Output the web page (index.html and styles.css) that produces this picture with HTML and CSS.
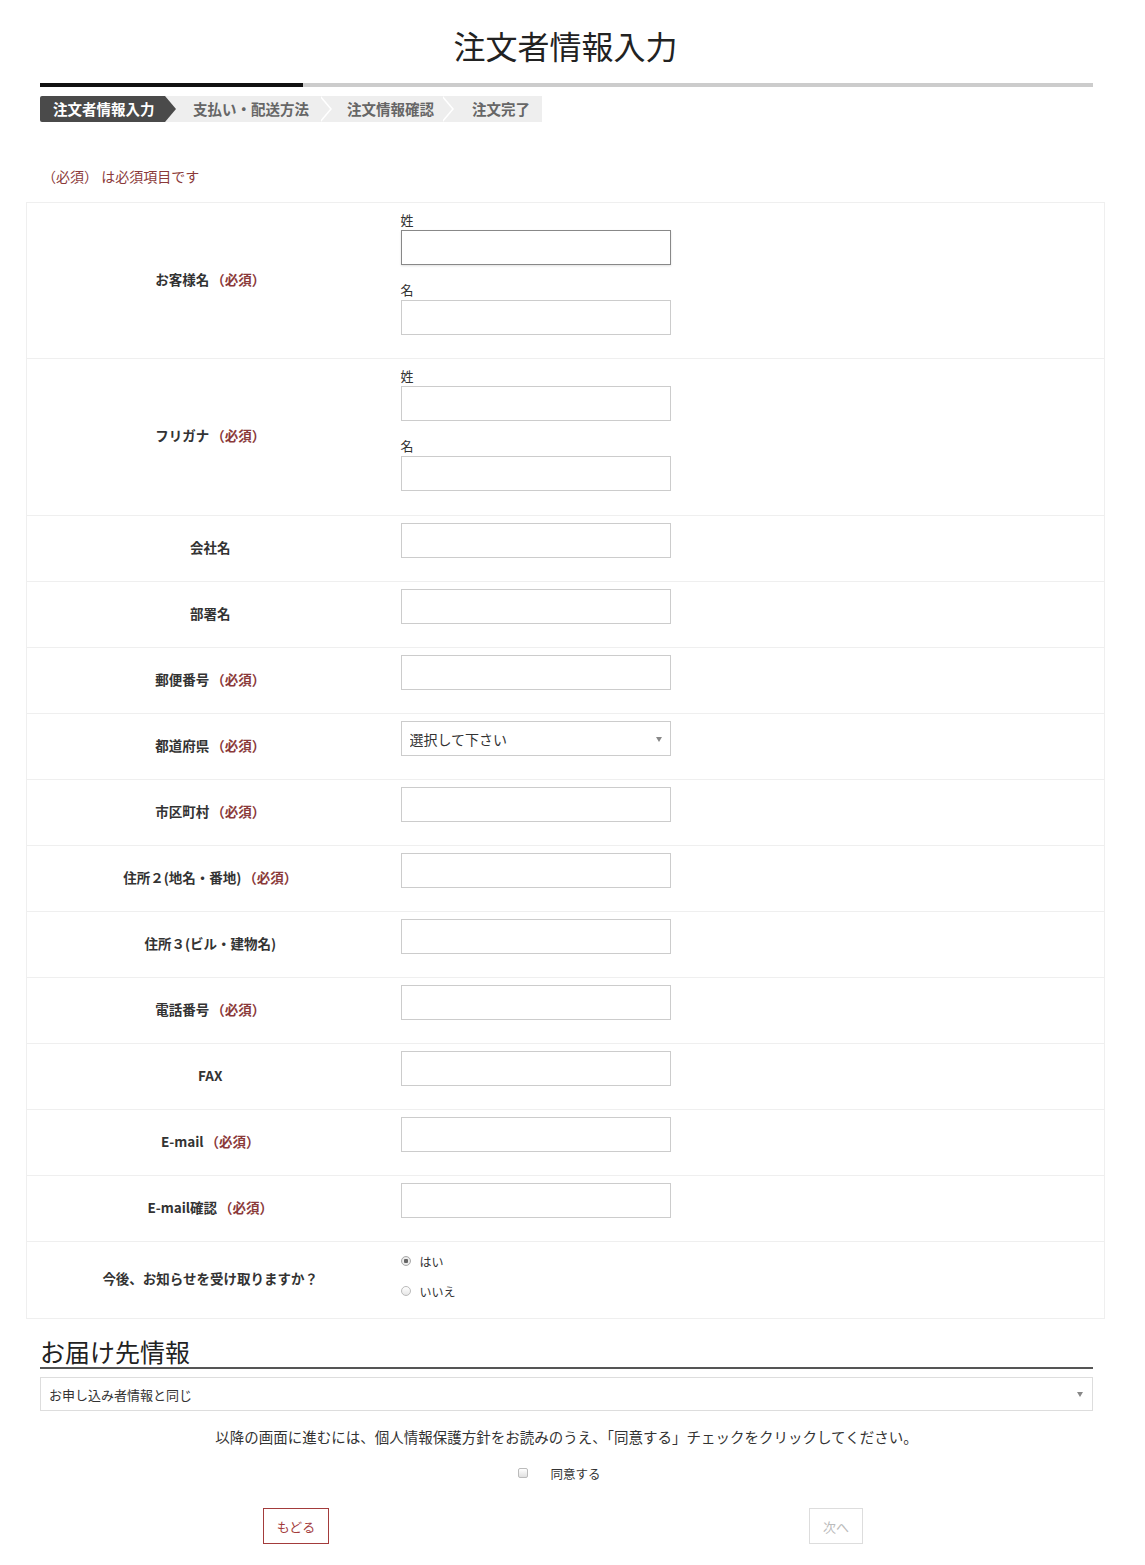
FILE: index.html
```html
<!DOCTYPE html>
<html lang="ja">
<head>
<meta charset="utf-8">
<title>注文者情報入力</title>
<link rel="stylesheet" href="styles.css">
</head>
<body>
<div class="page">
  <h1 class="title">注文者情報入力</h1>
  <div class="progress"><div class="progress-done"></div></div>
  <ol class="steps">
    <li class="step step-active step-1">注文者情報入力</li>
    <li class="step step-2">支払い・配送方法</li>
    <li class="step step-3">注文情報確認</li>
    <li class="step step-4">注文完了</li>
  </ol>

  <p class="note">（必須） は必須項目です</p>

  <table class="form-table">
    <tr>
      <th>お客様名<span class="req">（必須）</span></th>
      <td>
        <div class="sub">姓</div>
        <input class="field field-focus" type="text">
        <div class="sub">名</div>
        <input class="field" type="text">
      </td>
    </tr>
    <tr>
      <th>フリガナ<span class="req">（必須）</span></th>
      <td class="td-tall">
        <div class="sub">姓</div>
        <input class="field" type="text">
        <div class="sub">名</div>
        <input class="field" type="text">
      </td>
    </tr>
    <tr><th>会社名</th><td><input class="field" type="text"></td></tr>
    <tr><th>部署名</th><td><input class="field" type="text"></td></tr>
    <tr><th>郵便番号<span class="req">（必須）</span></th><td><input class="field" type="text"></td></tr>
    <tr>
      <th>都道府県<span class="req">（必須）</span></th>
      <td>
        <div class="select-wrap select-small">
          <select class="select"><option>選択して下さい</option></select>
          <span class="caret"></span>
        </div>
      </td>
    </tr>
    <tr><th>市区町村<span class="req">（必須）</span></th><td><input class="field" type="text"></td></tr>
    <tr><th>住所２(地名・番地)<span class="req">（必須）</span></th><td><input class="field" type="text"></td></tr>
    <tr><th>住所３(ビル・建物名)</th><td><input class="field" type="text"></td></tr>
    <tr><th>電話番号<span class="req">（必須）</span></th><td><input class="field" type="text"></td></tr>
    <tr><th>FAX</th><td><input class="field" type="text"></td></tr>
    <tr><th>E-mail<span class="req">（必須）</span></th><td><input class="field" type="text"></td></tr>
    <tr><th>E-mail確認<span class="req">（必須）</span></th><td><input class="field" type="text"></td></tr>
    <tr>
      <th>今後、お知らせを受け取りますか？</th>
      <td class="td-radio">
        <label class="radio-line"><input class="radio" type="radio" name="news" checked><span>はい</span></label>
        <label class="radio-line"><input class="radio" type="radio" name="news"><span>いいえ</span></label>
      </td>
    </tr>
  </table>

  <div class="section">
    <h2 class="section-title">お届け先情報</h2>
    <div class="select-wrap select-wide">
      <select class="select select-delivery"><option>お申し込み者情報と同じ</option></select>
      <span class="caret"></span>
    </div>

    <p class="agree-text">以降の画面に進むには、個人情報保護方針をお読みのうえ、「同意する」チェックをクリックしてください。</p>
    <label class="agree"><input class="check" type="checkbox"><span>同意する</span></label>

    <div class="buttons">
      <button class="btn btn-back" type="button">もどる</button>
      <button class="btn btn-next" type="button" disabled>次へ</button>
    </div>
  </div>
</div>
</body>
</html>
```

FILE: styles.css
```css
* { box-sizing: border-box; }

html, body {
  margin: 0;
  padding: 0;
  background: #fff;
}

body {
  font-family: "Noto Sans CJK JP", "Noto Sans", "Liberation Sans", sans-serif;
  color: #333;
}

.page {
  width: 1079px;
  margin-left: 26px;
  padding-top: 23px;
  padding-bottom: 22px;
}

.title {
  margin: 0;
  text-align: center;
  font-size: 32px;
  line-height: 44px;
  font-weight: 400;
  color: #222;
}

.progress {
  margin: 16px 12px 0 14px;
  height: 4px;
  background: #ccc;
}

.progress-done {
  width: 263px;
  height: 4px;
  background: #111;
}

.steps {
  list-style: none;
  margin: 9px 0 0 14px;
  padding: 0;
  display: flex;
  height: 26px;
}

.step {
  position: relative;
  height: 26px;
  line-height: 26px;
  font-size: 14.5px;
  font-weight: 700;
  color: #666;
  background: #eee;
  white-space: nowrap;
}

.step-1 { width: 125px; padding-left: 13px; background: #4a4a4a; color: #fff; border-radius: 2px 0 0 2px; z-index: 4; }
.step-2 { width: 155px; padding-left: 28px; z-index: 3; }
.step-3 { width: 122px; padding-left: 27px; z-index: 2; }
.step-4 { width: 100px; padding-left: 30px; z-index: 1; }

.step-1::after,
.step-2::after,
.step-3::after,
.step-2::before,
.step-3::before {
  content: "";
  position: absolute;
  top: 0;
  width: 0;
  height: 0;
  border-top: 13px solid transparent;
  border-bottom: 13px solid transparent;
}

.step-1::after {
  right: -11px;
  border-left: 11px solid #4a4a4a;
}

.step-2::before,
.step-3::before {
  right: -12px;
  border-left: 11px solid #fff;
}

.step-2::after,
.step-3::after {
  right: -10px;
  border-left: 11px solid #eee;
}

.note {
  margin: 44px 0 0 16px;
  font-size: 14px;
  line-height: 20px;
  color: #8b3a3a;
}

.form-table {
  margin-top: 16px;
  width: 1079px;
  border-collapse: collapse;
  border: 1px solid #efefef;
}

.form-table tr {
  border-top: 1px solid #efefef;
}

.form-table th {
  width: 367px;
  padding: 0 0 4px;
  text-align: center;
  vertical-align: middle;
  font-size: 13.5px;
  font-weight: 700;
  color: #333;
  line-height: 20px;
}

.form-table td {
  padding: 7px 0 8px 7px;
  vertical-align: top;
}

.form-table td.td-tall {
  padding-bottom: 9px;
}

.form-table td.td-radio {
  padding-top: 9px;
  padding-bottom: 7px;
}

.req {
  color: #8b3a3a;
  margin-left: 2px;
}

.sub {
  font-size: 13px;
  line-height: 20px;
  color: #333;
}

.field {
  display: block;
  width: 270px;
  height: 35px;
  margin: 0 0 15px;
  padding: 0 8px;
  border: 1px solid #ccc;
  background: #fff;
  font: inherit;
}

.field-focus {
  border-color: #888;
  box-shadow: 0 1px 2px rgba(0,0,0,0.12);
}

.select-wrap {
  position: relative;
}

.select-small {
  width: 270px;
  height: 35px;
  margin-bottom: 15px;
}

.select {
  -webkit-appearance: none;
  appearance: none;
  width: 100%;
  height: 100%;
  border: 1px solid #ccc;
  border-radius: 0;
  background: #fff;
  padding: 0 8px;
  font-family: inherit;
  font-size: 14px;
  color: #333;
}

.caret {
  position: absolute;
  right: 9px;
  top: 50%;
  margin-top: -2px;
  width: 0;
  height: 0;
  border-left: 3.5px solid transparent;
  border-right: 3.5px solid transparent;
  border-top: 5px solid #888;
  pointer-events: none;
}

.radio-line {
  display: flex;
  align-items: center;
  height: 20px;
  margin-bottom: 10px;
  font-size: 12px;
  color: #333;
}

.radio {
  -webkit-appearance: none;
  appearance: none;
  width: 10px;
  height: 10px;
  margin: 0 9px 0 0;
  border: 1px solid #bbb;
  border-radius: 50%;
  background: linear-gradient(#fff, #e6e6e6);
  position: relative;
}

.radio:checked {
  background: radial-gradient(circle, #666 0, #666 2px, #eee 2.5px, #ddd 100%);
  border-color: #aaa;
}

.section {
  padding: 0 12px 0 14px;
}

.section-title {
  margin: 17px 0 0;
  font-size: 25px;
  line-height: 30px;
  font-weight: 400;
  color: #222;
  border-bottom: 2px solid #555;
  padding-bottom: 1px;
}

.select-wide {
  margin-top: 8px;
  height: 34px;
}

.select-delivery {
  font-size: 13px;
  border-color: #ddd;
}

.select-wide .caret {
  right: 10px;
}

.agree-text {
  margin: 16px 0 0;
  text-align: center;
  font-size: 14.5px;
  line-height: 20px;
  color: #333;
}

.agree {
  display: flex;
  justify-content: center;
  align-items: center;
  margin: 16px 0 0;
  height: 20px;
  font-size: 12.5px;
  color: #333;
  padding-right: 14px;
}

.check {
  -webkit-appearance: none;
  appearance: none;
  width: 10px;
  height: 10px;
  margin: 0 22px 0 0;
  border: 1px solid #bbb;
  border-radius: 2px;
  background: linear-gradient(#fff, #e0e0e0);
}

.buttons {
  display: flex;
  gap: 480px;
  margin-top: 25px;
  padding-left: 223px;
}

.btn {
  height: 36px;
  background: #fff;
  font-family: inherit;
  font-size: 13px;
  padding: 0;
  border-radius: 0;
}

.btn-back {
  width: 66px;
  border: 1px solid #a33b3b;
  color: #a33b3b;
}

.btn-next {
  width: 54px;
  border: 1px solid #ddd;
  color: #bbb;
}
```
